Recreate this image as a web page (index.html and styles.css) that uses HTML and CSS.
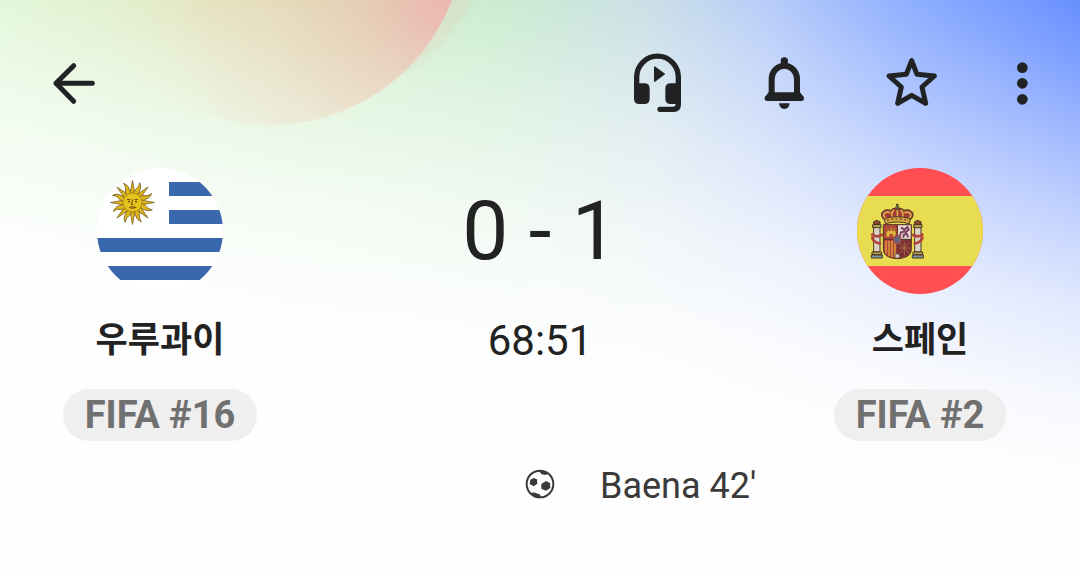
FILE: index.html
```html
<!DOCTYPE html>
<html lang="ko">
<head>
  <meta charset="UTF-8" />
  <meta name="viewport" content="width=device-width, initial-scale=1.0"/>
  <title>우루과이 0 - 1 스페인</title>
  <link rel="stylesheet" href="styles.css">
</head>
<body>
  <main class="match-header">
    <div class="red-circle"></div>

    <nav class="toolbar">
      <button type="button" class="icon-btn" aria-label="뒤로">
        <svg viewBox="0 0 192 192" class="icon line">
          <path d="M151 97H42M95 44L42 97L95 151" stroke-width="15"/>
        </svg>
      </button>
      <div class="actions">
        <button type="button" class="icon-btn" aria-label="중계 듣기">
          <svg viewBox="-3 -2 192 192" class="icon line">
            <path d="M32 120V76A62.5 62.5 0 0 1 157 76V158Q157 173 142 173H102" stroke-width="16"/>
            <path class="solid" d="M24 95H55Q71 95 71 111V141Q71 157 55 157H40Q24 157 24 141ZM165 95H134Q118 95 118 111V141Q118 157 134 157H165Z"/>
            <path class="solid" d="M86 46L115 67L86 89Z" stroke="currentColor" stroke-width="4"/>
          </svg>
        </button>
        <button type="button" class="icon-btn" aria-label="알림">
          <svg viewBox="0 0 192 192" class="icon line">
            <path d="M59 138V84A38 40 0 0 1 135 84V138" stroke-width="18"/>
            <path d="M46 142H148" stroke-width="16"/>
            <path class="solid" d="M50 124L39 138H155L144 124Z"/>
            <circle class="solid" cx="97" cy="30" r="11"/>
            <path class="solid" d="M81 157H113A16 17 0 0 1 81 157Z"/>
          </svg>
        </button>
        <button type="button" class="icon-btn" aria-label="즐겨찾기">
          <svg viewBox="0 0 192 192" class="icon line">
            <path d="M98 29L114 70L166 75L129 108L140 157L98 133L56 157L67 108L30 75L82 70Z" stroke-width="15"/>
          </svg>
        </button>
        <button type="button" class="icon-btn narrow" aria-label="더보기">
          <svg viewBox="0 0 96 192" class="icon">
            <circle cx="49" cy="50" r="16"/>
            <circle cx="49" cy="97" r="16"/>
            <circle cx="49" cy="145" r="16"/>
          </svg>
        </button>
      </div>
    </nav>

    <section class="match">
      <div class="team">
        <svg class="flag" viewBox="0 0 126 126" role="img" aria-label="우루과이 국기">
          <defs>
            <clipPath id="round"><circle cx="63" cy="63" r="63"/></clipPath>
            <path id="ray" d="M-2.6 -8L0 -22L2.6 -8Z"/>
            <path id="wave" d="M-2.6 -8C-4 -13 1 -15 -1 -21C4 -17 1 -13 2.6 -8Z"/>
          </defs>
          <g clip-path="url(#round)">
            <rect width="126" height="126" fill="#fff"/>
            <path fill="#3a68ad" d="M72 14H126V28H72ZM72 42H126V56H72ZM0 70H126V84H0ZM0 98H126V112H0Z"/>
            <g transform="translate(35.5 34.5)" fill="#dfb51c" stroke="#765f24" stroke-width="0.8">
              <use href="#ray"/>
              <use href="#wave" transform="rotate(22.5)"/>
              <use href="#ray" transform="rotate(45)"/>
              <use href="#wave" transform="rotate(67.5)"/>
              <use href="#ray" transform="rotate(90)"/>
              <use href="#wave" transform="rotate(112.5)"/>
              <use href="#ray" transform="rotate(135)"/>
              <use href="#wave" transform="rotate(157.5)"/>
              <use href="#ray" transform="rotate(180)"/>
              <use href="#wave" transform="rotate(202.5)"/>
              <use href="#ray" transform="rotate(225)"/>
              <use href="#wave" transform="rotate(247.5)"/>
              <use href="#ray" transform="rotate(270)"/>
              <use href="#wave" transform="rotate(292.5)"/>
              <use href="#ray" transform="rotate(315)"/>
              <use href="#wave" transform="rotate(337.5)"/>
              <circle r="9.5" fill="#e6c21c" stroke="#a5851c"/>
              <path d="M-5.5 -3H-2M2 -3H5.5M0 -3L-1 2H1M-3 5Q0 3.5 3 5Q0 6.5 -3 5" fill="none" stroke="#7a5a12" stroke-width="1.2"/>
              <circle cx="-3.5" cy="-1" r="1" fill="#6b4c10" stroke="none"/>
              <circle cx="3.5" cy="-1" r="1" fill="#6b4c10" stroke="none"/>
            </g>
          </g>
        </svg>
        <h2 class="team-name">우루과이</h2>
        <span class="rank">FIFA #16</span>
      </div>

      <div class="result">
        <p class="score">0 - 1</p>
        <p class="clock">68:51</p>
      </div>

      <div class="team">
        <svg class="flag" viewBox="0 0 378 378" role="img" aria-label="스페인 국기">
          <clipPath id="round-es"><circle cx="189" cy="189" r="189"/></clipPath>
          <g clip-path="url(#round-es)">
            <rect width="378" height="378" fill="#ff4f53"/>
            <rect y="84" width="378" height="210" fill="#e8dc50"/>
            <g stroke="#4b3428" stroke-width="3">
              <!-- columnas -->
              <path fill="#d9d3c4" d="M50 176H69V252H50ZM173 176H192V252H173Z"/>
              <path fill="#b9a94a" d="M47 170H72V179H47ZM170 170H195V179H170ZM45 252H74V260H45ZM168 252H197V260H168Z"/>
              <path fill="#7f9a9c" d="M43 261H76V270H43ZM166 261H199V270H166Z"/>
              <path fill="#8e4b2c" d="M50 169V161L59 157L69 161V169ZM173 169V161L182 157L192 161V169Z"/>
              <path fill="none" stroke="#b2403c" stroke-width="8" d="M43 198Q59 212 77 199M45 206Q47 224 72 227M199 198Q183 212 165 199M197 206Q195 224 170 227"/>
              <!-- escudo -->
              <path fill="#b8433b" d="M79 170H163V242C163 263 147 270 121 272C95 270 79 263 79 242Z"/>
              <path fill="#e4d8d4" stroke="none" d="M123 172H161V213H123Z"/>
              <path fill="#7c3034" stroke="none" d="M123 216H161V243C161 259 146 268 123 269Z"/>
              <path fill="none" stroke="#d9a63b" stroke-width="4" d="M87 218V256M96 218V264M105 218V267M114 218V268"/>
              <path fill="#e3b43b" stroke="#99512c" stroke-width="2" d="M87 207V190H91V181H95V188H100V178H105V188H110V181H114V190H117V207H107V199H98V207Z"/>
              <path fill="none" stroke="#79405f" stroke-width="6" d="M132 179L143 185L151 177L155 185L146 193L154 208M144 190L132 193L129 205M143 196L138 209"/>
              <path fill="none" stroke="#b7804c" stroke-width="2" d="M128 223L156 256M156 223L128 256M142 220V263M126 240H160"/>
              <path fill="none" d="M79 214H163M121 170V270"/>
              <ellipse cx="121" cy="215" rx="11" ry="13" fill="#68627c" stroke="#b8433b"/>
              <path fill="#cfc6b9" stroke-width="2" d="M112 265Q121 248 130 265L121 272Z"/>
              <!-- corona -->
              <path fill="#a63a35" d="M84 157C60 138 82 119 101 127Q112 116 121 125Q130 116 141 127C160 119 182 138 158 157Z"/>
              <path fill="none" stroke="#d6b04a" stroke-width="5" d="M88 153C72 139 84 129 100 134M154 153C170 139 158 129 142 134M107 151Q99 136 111 126M135 151Q143 136 131 126M121 125V151"/>
              <path fill="#d2a941" d="M82 152Q121 140 160 152L157 167Q121 157 85 167Z"/>
              <path fill="none" stroke="#8b392e" stroke-width="4" stroke-dasharray="6 7" d="M90 157Q121 148 154 158"/>
              <circle cx="121" cy="119" r="5" fill="#6d7d4a"/>
              <path fill="none" stroke-width="4" d="M121 107V115M117 110H125"/>
            </g>
          </g>
        </svg>
        <h2 class="team-name">스페인</h2>
        <span class="rank">FIFA #2</span>
      </div>
    </section>

    <section class="events">
      <svg class="ball" viewBox="0 0 90 90" role="img" aria-label="골">
        <circle cx="45" cy="45" r="40" fill="none" stroke="#3a3a3a" stroke-width="6"/>
        <path d="M26 27L36 31L37 44L26 52L14 45L16 32ZM63 36L75 42L76 57L63 65L49 59L49 45ZM37 5L66 8L70 14L62 18L50 16L45 10ZM16 74L25 70L34 73L44 76L49 85L36 86Z"/>
      </svg>
      <span class="scorer">Baena 42'</span>
    </section>

    <hr class="divider">
  </main>
</body>
</html>
```

FILE: styles.css
```css
body {
  margin: 0;
  font-family: Roboto, 'Noto Sans CJK KR', sans-serif;
  color: #222;
  background-color: #fefefe;
}

.match-header {
  position: relative;
  overflow: hidden;
  min-height: 100vh;
  box-sizing: border-box;
  padding-top: 51px;
  background:
    linear-gradient(189deg, rgba(254, 254, 254, 0) 0%, rgba(254, 254, 254, 0.12) 7%, rgba(254, 254, 254, 0.28) 14%, rgba(254, 254, 254, 0.56) 27%, rgba(254, 254, 254, 0.81) 41%, rgba(254, 254, 254, 0.95) 54%, #fefefe 66%),
    radial-gradient(ellipse 250px 150px at 220px 0, rgba(235, 190, 130, 0.45), rgba(235, 200, 140, 0) 100%),
    linear-gradient(to right, #c8f5bd, #bdedb5 28%, #bbe7c2 46%, #c0d9e2 60%, #aec6f8 71%, #8aabff 83%, #688fff);
}

/* círculo rojo del fondo */
.red-circle {
  position: absolute;
  top: -265px;
  left: 75px;
  width: 390px;
  height: 390px;
  border-radius: 50%;
  background: radial-gradient(circle at 100% 64%, rgba(255, 145, 155, 0.68), rgba(245, 175, 160, 0.45) 24%, rgba(245, 195, 175, 0.28) 44%, rgba(240, 215, 180, 0.08) 64%, rgba(240, 225, 170, 0) 75%);
  box-shadow: 32px -24px 6px 0 rgba(250, 160, 165, 0.14);
}

.toolbar {
  position: relative;
  display: flex;
  justify-content: space-between;
  padding: 0 42px;
}

.actions {
  display: flex;
  gap: 63px;
}

.icon-btn {
  width: 64px;
  height: 64px;
  padding: 0;
  border: none;
  background: none;
  color: #202223;
  cursor: pointer;
}

.icon-btn.narrow {
  width: 32px;
}

.icon {
  display: block;
  width: 100%;
  height: 100%;
  fill: currentColor;
}

.icon.line {
  fill: none;
  stroke: currentColor;
  stroke-linecap: round;
  stroke-linejoin: round;
}

.icon .solid {
  fill: currentColor;
}

.icon .solid:not([stroke]) {
  stroke: none;
}

.match {
  position: relative;
  display: grid;
  grid-template-columns: 8fr 11fr 8fr;
  margin-top: 53px;
}

.team {
  display: flex;
  flex-direction: column;
  align-items: center;
}

.flag {
  width: 126px;
  height: 126px;
}

.team-name {
  margin: 22px 0 23px;
  font-size: 35px;
  font-weight: 700;
  line-height: 50px;
}

.rank {
  padding: 0 22px;
  border-radius: 26px;
  background-color: #efefef;
  color: #707070;
  font-size: 38px;
  font-weight: 700;
  line-height: 52px;
}

.result {
  text-align: center;
}

.score {
  margin: 0;
  font-size: 82px;
  line-height: 126px;
}

.clock {
  margin: 22px 0 0;
  font-size: 42px;
  line-height: 50px;
}

.events {
  display: grid;
  grid-template-columns: 1fr 30px 1fr;
  column-gap: 45px;
  align-items: center;
  margin-top: 23px;
}

.ball {
  grid-column: 2;
  width: 30px;
  height: 30px;
  margin-bottom: 4px;
  fill: #3a3a3a;
}

.scorer {
  color: #3a3a3a;
  font-size: 36px;
  line-height: 44px;
}

.divider {
  margin: 39px 40px 0;
  border: none;
  border-top: 2px solid #fbfbfb;
}
```
